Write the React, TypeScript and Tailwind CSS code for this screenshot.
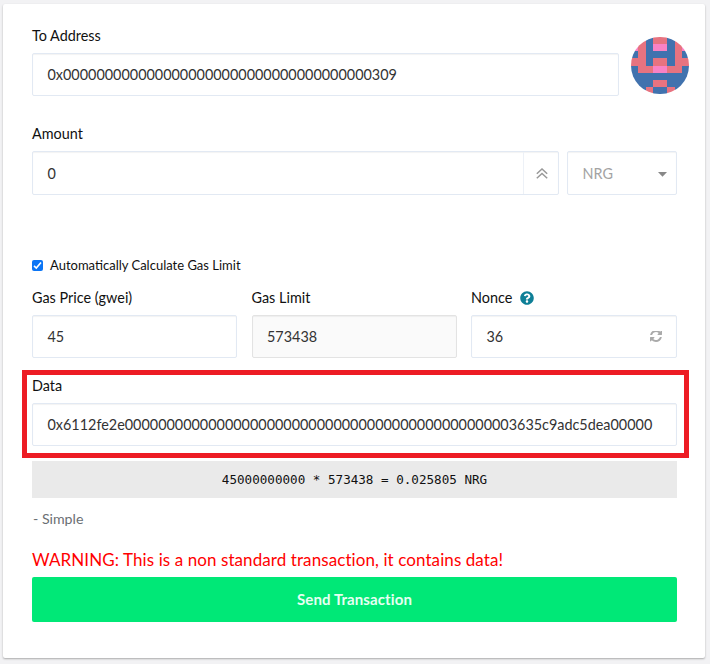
import type { ReactNode } from "react";
import { FaQuestionCircle } from "react-icons/fa";

const identicon = [
  "RRBRRBRR",
  "PRBPPBRP",
  "BRBBBBRB",
  "RRBRRBRR",
  "BRRPPRRB",
  "BBBBBBBB",
  "BBBRRBBB",
  "BBRBBRBB",
];
const fills: Record<string, string> = { B: "#4172ae", R: "#e77380", P: "#f982c5" };

function Identicon() {
  return (
    <svg
      className="h-[57px] w-[58px] shrink-0 rounded-full"
      viewBox="0 0 8 8"
      preserveAspectRatio="none"
      shapeRendering="crispEdges"
    >
      {identicon.map((row, y) =>
        row.split("").map((c, x) => (
          <rect key={`${x}-${y}`} x={x} y={y} width="1" height="1" fill={fills[c]} />
        ))
      )}
    </svg>
  );
}

function RefreshIcon() {
  return (
    <svg className="h-[12px] w-[12px]" viewBox="0 0 1536 1536" fill="#aaa">
      <path
        transform="translate(0 -128)"
        d="M1511 928q0 5-1 7-64 268-268 434.5t-478 166.5q-146 0-282.500-55t-243.500-157l-129 129q-19 19-45 19t-45-19-19-45v-448q0-26 19-45t45-19h448q26 0 45 19t19 45-19 45l-137 137q71 66 161 102t187 36q134 0 250-65t186-179q11-17 53-117 8-23 30-23h192q13 0 22.500 9.500t9.500 22.500zm25-800v448q0 26-19 45t-45 19h-448q-26 0-45-19t-19-45 19-45l138-138q-148-137-349-137-134 0-250 65t-186 179q-11 17-53 117-8 23-30 23h-199q-13 0-22.500-9.500t-9.500-22.500v-7q65-268 270-434.500t480-166.500q146 0 284 55.500t245 156.500l130-129q19-19 45-19t45 19 19 45z"
      />
    </svg>
  );
}

function Label({ children }: { children: ReactNode }) {
  return <div className="flex h-[16px] items-center text-[14.4px] leading-[16px] whitespace-nowrap text-[#111]">{children}</div>;
}

function Field({ children, className = "" }: { children: ReactNode; className?: string }) {
  return (
    <div
      className={`flex items-center rounded-[2px] border pl-[14.5px] text-[14.4px] whitespace-nowrap text-[#333] shadow-[inset_0_1px_1px_rgba(0,0,0,0.05)] ${className}`}
    >
      {children}
    </div>
  );
}

export default function App() {
  return (
    <div className="h-[664px] w-[710px] overflow-hidden bg-[#f2f2f4] pt-1 pl-[3px] font-[Lato,sans-serif]">
      <main className="h-[654px] w-[702px] rounded-[2px] bg-white pt-6 pr-[28px] pl-[29px] shadow-[0_1px_2px_rgba(0,0,0,0.3)]">
        <section className="flex h-[98px] gap-[11.5px]">
          <div className="w-[587px] shrink-0">
            <Label>To Address</Label>
            <Field className="mt-[9px] h-[43px] border-[#e2e9f3]">0x0000000000000000000000000000000000000309</Field>
          </div>
          <div className="pt-[9px]">
            <Identicon />
          </div>
        </section>

        <section>
          <Label>Amount</Label>
          <div className="mt-[9px] flex gap-2">
            <Field className="h-[44px] w-[527px] justify-between border-[#e2e9f3]">
              <span className="pt-px">0</span>
              <span className="flex h-[42px] w-[35px] items-center justify-center border-l border-[#edf1f7] pt-px pl-px">
                <svg className="h-[11px] w-3" viewBox="0 0 12 11" fill="none" stroke="#999" strokeWidth="1.5">
                  <path d="M.8 5.800 6 1l5.200 4.800M.8 10.300 6 5.500l5.200 4.800" />
                </svg>
              </span>
            </Field>
            <Field className="h-[44px] w-[110px] justify-between border-[#e2e9f3] pr-[9px]">
              <span className="pt-px text-[#a3a3a3]">NRG</span>
              <svg className="mt-[2px] h-[5px] w-[9px]" viewBox="0 0 9 5" fill="#888">
                <path d="M0 0h9L4.500 4.800z" />
              </svg>
            </Field>
          </div>
        </section>

        <label className="mt-[62px] flex h-[17px] items-center text-[13px] whitespace-nowrap text-[#111]">
          <span className="mr-[7px] flex h-[11px] w-[11px] items-center justify-center rounded-[2px] bg-[#0b75f5]">
            <svg className="h-[9px] w-[9px]" viewBox="0 0 9 9" fill="none" stroke="white" strokeWidth="1.6">
              <path d="m1 4.800 2.300 2.200L8 1.500" />
            </svg>
          </span>
          Automatically Calculate Gas Limit
        </label>

        <section className="mt-4 flex justify-between">
          <div className="w-[205px]">
            <Label>Gas Price (gwei)</Label>
            <Field className="mt-[9px] h-[43px] border-[#e2e9f3]">45</Field>
          </div>
          <div className="w-[205px]">
            <Label>Gas Limit</Label>
            <Field className="mt-[9px] h-[43px] border-[#e3e3e3] bg-[#fafafa]">573438</Field>
          </div>
          <div className="w-[206px]">
            <Label>
              Nonce
              <FaQuestionCircle className="ml-2 text-[14px] text-[#0e7f97]" />
            </Label>
            <Field className="mt-[9px] h-[43px] justify-between border-[#e2e9f3] pr-[14px]">
              <span>36</span>
              <RefreshIcon />
            </Field>
          </div>
        </section>

        <section className="-mx-[10px] mt-3 h-[88px] w-[667px] border-[5px] border-[#ed1c24] pt-[3px] pr-[7px] pl-[5px]">
          <Label>Data</Label>
          <Field className="mt-[9px] h-[43px] border-[#e2e9f3]">0x6112fe2e00000000000000000000000000000000000000000000003635c9adc5dea00000</Field>
        </section>

        <div className="mt-[3px] flex h-[37px] items-center justify-center bg-[#eaeaea] pt-px font-['DejaVu_Sans_Mono',monospace] text-[12.6px] whitespace-pre text-[#111]">
          45000000000 * 573438 = 0.025805 NRG
        </div>
        <div className="mt-[12px] h-[17px] pl-px text-[14.2px] leading-[17px] text-[#6b6f73]">- Simple</div>
        <p className="mt-[23px] h-[20px] text-[17px] leading-[20px] tracking-[0.085px] whitespace-nowrap text-[#f00]">
          WARNING: This is a non standard transaction, it contains data!
        </p>
        <button className="mt-[7px] flex h-[45px] w-full items-center justify-center rounded-[2px] bg-[#00e877] text-[15px] font-bold tracking-[0.1px] text-[#e6fff2]">
          Send Transaction
        </button>
      </main>
    </div>
  );
}
